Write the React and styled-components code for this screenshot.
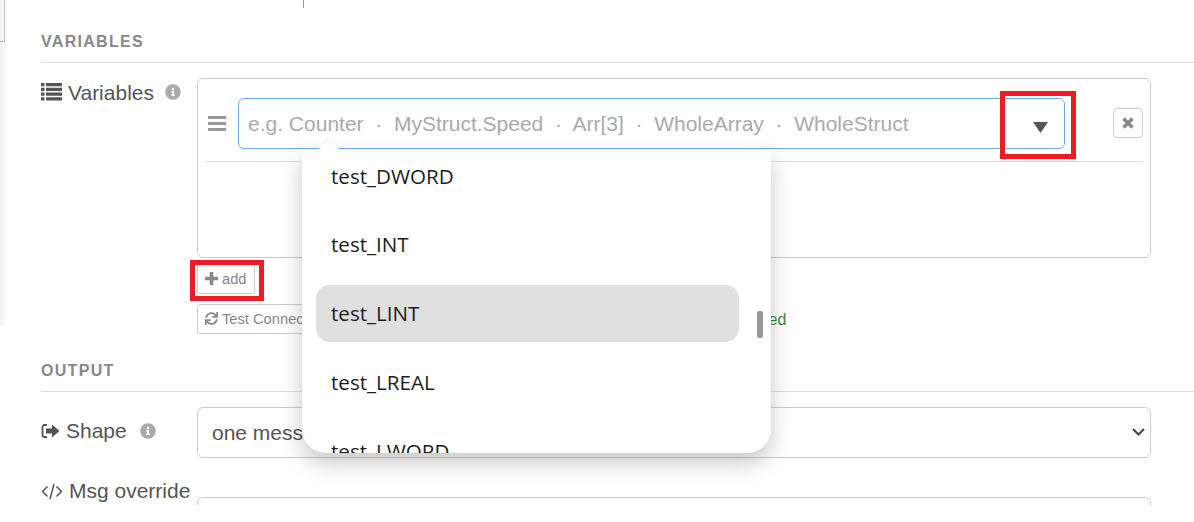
import React from "react";
import styled, { createGlobalStyle } from "styled-components";
import { FaInfoCircle, FaSync } from "react-icons/fa";

const Global = createGlobalStyle`
  html, body { margin: 0; padding: 0; height: 522px; overflow: hidden; background: #fff; }
  #root { height: 522px; }
  * { box-sizing: border-box; }
`;

const Page = styled.div`
  position: relative;
  width: 1194px;
  height: 522px;
  overflow: hidden;
  padding: 32px 0 0 41px;
  font-family: "Liberation Sans", Arial, sans-serif;
  color: #555;
`;
const EdgeShade = styled.div`
  position: absolute;
  left: 0;
  top: 0;
  width: 8px;
  height: 325px;
  background: linear-gradient(to right, #f1f1f1, #fff);
`;
const EdgeFrame = styled.div`
  position: absolute;
  left: 0;
  top: 0;
  width: 5px;
  height: 42px;
  border-right: 1px solid #bbb;
  border-bottom: 1px solid #bbb;
`;
const TopTick = styled.div`
  position: absolute;
  left: 303px;
  top: 0;
  width: 1px;
  height: 8px;
  background: #999;
`;
const SectionTitle = styled.div`
  height: 31px;
  padding-top: 1px;
  border-bottom: 1px solid #ddd;
  font-size: 16px;
  line-height: 18px;
  font-weight: 700;
  letter-spacing: 1.3px;
  color: #888;
  margin-bottom: ${(p) => p.$after}px;
`;
const FormRow = styled.div`
  display: flex;
  align-items: flex-start;
`;
const Label = styled.div`
  width: 156px;
  flex: none;
  display: flex;
  align-items: center;
  gap: ${(p) => p.$gap || 6}px;
  height: 28px;
  margin-top: ${(p) => p.$top || 0}px;
  font-size: 21px;
  color: #555;
  white-space: nowrap;
  svg { flex: none; }
`;
const LabelText = styled.span`
  position: relative;
  top: ${(p) => p.$nudge || 0}px;
`;
const Info = styled(FaInfoCircle)`
  color: #aaa;
  font-size: 16px;
  margin-left: ${(p) => p.$left}px;
`;
const FieldBox = styled.div`
  width: 954px;
  height: 180px;
  border: 1px solid #ccc;
  border-radius: 6px;
  padding: 19px 7px 0;
`;
const VarRow = styled.div`
  display: flex;
  align-items: center;
  height: 64px;
  padding: 0 0 13px 3px;
  border-bottom: 1px solid #ddd;
`;
const Grip = styled.svg`
  width: 18px;
  height: 15px;
  flex: none;
  fill: #999;
`;
const VarInputWrap = styled.div`
  position: relative;
  width: 827px;
  height: 51px;
  margin-left: 12px;
  flex: none;
`;
const VarInput = styled.input`
  width: 100%;
  height: 100%;
  border: 1px solid #6fa9ea;
  border-radius: 6px;
  padding: 1px 60px 0 9px;
  outline: none;
  font-family: "Liberation Sans", Arial, sans-serif;
  font-size: 21px;
  &::placeholder { color: #aaa; opacity: 1; }
`;
const Caret = styled.svg`
  position: absolute;
  right: 17px;
  top: 24px;
  width: 15px;
  height: 11px;
`;
const RemoveBtn = styled.button`
  width: 30px;
  height: 30px;
  margin-left: 48px;
  flex: none;
  padding: 0;
  background: #fff;
  border: 1px solid #ccc;
  border-radius: 4px;
  display: flex;
  align-items: center;
  justify-content: center;
`;
const CrossIcon = styled.svg`
  width: 12px;
  height: 12px;
  stroke: #888;
  stroke-width: 3.4;
  fill: none;
`;
const PlusIcon = styled.svg`
  width: 13px;
  height: 13px;
  flex: none;
  stroke: #888;
  stroke-width: 3.6;
  fill: none;
`;
const SmallBtn = styled.button`
  display: flex;
  align-items: center;
  gap: 4px;
  height: 30px;
  padding: 0 6px 1px 7px;
  width: ${(p) => p.$w}px;
  background: #fff;
  border: 1px solid #ccc;
  border-radius: 3px;
  color: #888;
  font-family: "Liberation Sans", Arial, sans-serif;
  font-size: 14.700px;
  white-space: nowrap;
  overflow: hidden;
`;
const Actions = styled.div`
  margin-left: 156px;
  padding-top: 6px;
  display: flex;
  flex-direction: column;
  gap: 10px;
  height: 103px;
`;
const TestRow = styled.div`
  display: flex;
  align-items: center;
`;
const Status = styled.span`
  margin-left: 362px;
  padding-top: 2px;
  font-size: 16px;
  color: #3c8a3c;
`;
const SelectWrap = styled.div`
  position: relative;
  width: 954px;
  height: 51px;
`;
const ShapeSelect = styled.select`
  appearance: none;
  width: 100%;
  height: 100%;
  border: 1px solid #ccc;
  border-radius: 6px;
  background: #fff;
  color: #555;
  padding: 0 40px 0 14px;
  font-family: "Liberation Sans", Arial, sans-serif;
  font-size: 21px;
`;
const Chevron = styled.svg`
  position: absolute;
  right: 6px;
  top: 21px;
  width: 13px;
  height: 8px;
  fill: none;
  stroke: #444;
  stroke-width: 2;
`;
const MsgBox = styled.div`
  width: 954px;
  height: 8px;
  margin-top: 39px;
  border: 1px solid #ccc;
  border-bottom: 0;
  border-radius: 6px 6px 0 0;
`;
const ListIcon = styled.svg`
  width: 21px;
  height: 18px;
  fill: #555;
  flex: none;
`;
const CodeIcon = styled.svg`
  width: 22px;
  height: 17px;
  fill: none;
  stroke: #555;
  stroke-width: 1.5;
  flex: none;
`;
const ShapeIcon = styled.svg`
  width: 19px;
  height: 16px;
  flex: none;
`;

const Menu = styled.div`
  position: absolute;
  left: 302px;
  top: 150px;
  width: 469px;
  height: 303px;
  background: #fff;
  border-radius: 0 0 24px 24px;
  box-shadow: 0 10px 22px rgba(0, 0, 0, 0.22);
  &::before {
    content: "";
    position: absolute;
    left: 19px;
    top: -8px;
    width: 16px;
    height: 16px;
    background: #fff;
    transform: rotate(45deg);
    box-shadow: -1px -1px 1px rgba(0, 0, 0, 0.05);
  }
`;
const MenuList = styled.div`
  position: relative;
  height: 100%;
  overflow: hidden;
  border-radius: 0 0 24px 24px;
`;
const MenuInner = styled.div`
  display: flex;
  flex-direction: column;
  gap: 11.750px;
  margin: -3px 0 0 14px;
  width: 423px;
`;
const MenuItem = styled.div`
  flex: none;
  height: 57px;
  padding-left: 15px;
  display: flex;
  align-items: center;
  border-radius: 14px;
  background: ${(p) => (p.$active ? "#e0e0e0" : "transparent")};
  font-family: "Open Sans", "Noto Sans", sans-serif;
  font-size: 20.600px;
  color: #1c1c1c;
`;
const ScrollThumb = styled.div`
  position: absolute;
  left: 455px;
  top: 161px;
  width: 6px;
  height: 27px;
  border-radius: 2px;
  background: #999;
`;
const Callout = styled.div`
  position: absolute;
  left: ${(p) => p.$x}px;
  top: ${(p) => p.$y}px;
  width: ${(p) => p.$w}px;
  height: ${(p) => p.$h}px;
  border: 5px solid #ed1c24;
  pointer-events: none;
`;

const items = ["test_DWORD", "test_INT", "test_LINT", "test_LREAL", "test_LWORD"];

export default function App() {
  return (
    <Page>
      <Global />
      <EdgeShade />
      <EdgeFrame />
      <TopTick />
      <SectionTitle $after={15}>VARIABLES</SectionTitle>
      <FormRow>
        <Label>
          <ListIcon viewBox="0 0 21 18">
            <path d="M0 0h3.500v3.300H0zM5 0h16v3.300H5zM0 4.700h3.500V8H0zM5 4.700h16V8H5zM0 9.500h3.500v3.300H0zM5 9.500h16v3.300H5zM0 14.200h3.500v3.300H0zM5 14.200h16v3.300H5z" />
          </ListIcon>
          <LabelText $nudge={1}>Variables</LabelText>
          <Info $left={5} />
        </Label>
        <FieldBox>
          <VarRow>
            <Grip viewBox="0 0 18 15">
              <path d="M0 0h18v3H0zM0 6h18v3H0zM0 12h18v3H0z" />
            </Grip>
            <VarInputWrap>
              <VarInput
                readOnly
                placeholder="e.g. Counter  ·  MyStruct.Speed  ·  Arr[3]  ·  WholeArray  ·  WholeStruct"
              />
              <Caret viewBox="0 0 15 11">
                <polygon points="0,0 15,0 7.5,11" fill="#555" />
              </Caret>
            </VarInputWrap>
            <RemoveBtn>
              <CrossIcon viewBox="0 0 12 12">
                <path d="M1.500 1.500l9 9M10.500 1.500l-9 9" />
              </CrossIcon>
            </RemoveBtn>
          </VarRow>
        </FieldBox>
      </FormRow>
      <Actions>
        <SmallBtn $w={58}>
          <PlusIcon viewBox="0 0 13 13">
            <path d="M6.500 0v13M0 6.500h13" />
          </PlusIcon>
          add
        </SmallBtn>
        <TestRow>
          <SmallBtn $w={150}>
            <FaSync size={13} />
            Test Connection
          </SmallBtn>
          <Status>Connected</Status>
        </TestRow>
      </Actions>
      <SectionTitle $after={15}>OUTPUT</SectionTitle>
      <FormRow>
        <Label $top={10} $gap={6}>
          <ShapeIcon viewBox="0 0 19 16">
            <path d="M6 2H3.500A2 2 0 0 0 1.500 4v8a2 2 0 0 0 2 2H6" fill="none" stroke="#555" strokeWidth="1.8" />
            <path d="M5 5.500h6V1.500L18.500 8 11 14.500V10.500H5z" fill="#555" />
          </ShapeIcon>
          Shape
          <Info $left={7} />
        </Label>
        <SelectWrap>
          <ShapeSelect defaultValue="one">
            <option value="one">one message per variable</option>
          </ShapeSelect>
          <Chevron viewBox="0 0 13 8">
            <path d="M1 1l5.500 5.500L12 1" />
          </Chevron>
        </SelectWrap>
      </FormRow>
      <FormRow>
        <Label $top={19} $gap={6}>
          <CodeIcon viewBox="0 0 22 17">
            <path d="M6.500 3.500 1.500 8.500l5 5M15.500 3.500l5 5-5 5M13 1 9 16" />
          </CodeIcon>
          Msg override
        </Label>
        <MsgBox />
      </FormRow>
      <Menu>
        <MenuList>
          <MenuInner>
            {items.map((t) => (
              <MenuItem key={t} $active={t === "test_LINT"}>
                {t}
              </MenuItem>
            ))}
          </MenuInner>
          <ScrollThumb />
        </MenuList>
      </Menu>
      <Callout $x={1000} $y={91} $w={76} $h={68} />
      <Callout $x={190} $y={260} $w={74} $h={41} />
    </Page>
  );
}
